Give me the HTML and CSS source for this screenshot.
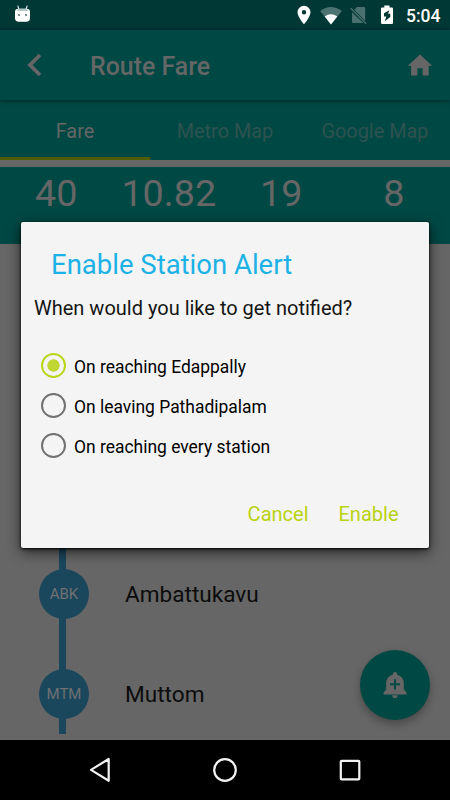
FILE: index.html
```html
<!DOCTYPE html>
<html lang="en">
<head>
<meta charset="utf-8">
<title>Route Fare</title>
<link rel="stylesheet" href="styles.css">
</head>
<body>
<div class="screen">
  <header class="status">
    <svg class="droid" width="18" height="20" viewBox="0 0 18 20"><path d="M4.800 .6l1.200 4M14.200 .6l-1.200 4" stroke="#dfe8e7" stroke-width="1.200"/><path d="M2 6.500Q2 4 5.500 3.700h8q3.500.3 3.500 2.800v6.500q0 3.800-3.800 3.800H5.800q-3.800 0-3.800-3.800z" fill="#fff"/><path d="M4 6Q4.500 3.700 6.500 3.700h6q2 0 2.500 2.300z" fill="#b5c6c4"/><path d="M5 9h2v2H5zM12 9h2v2h-2z" fill="#7c9290"/></svg>
    <div class="signals">
      <svg width="14" height="20" viewBox="0 0 14 20"><path fill="#fff" fill-rule="evenodd" d="M7 .8A6.500 6.500 0 0 0 .5 7.300C.5 12 7 19.300 7 19.300S13.500 12 13.500 7.300A6.500 6.500 0 0 0 7 .8zm0 4.200a2.200 2.200 0 1 1 0 4.400A2.200 2.200 0 0 1 7 5z"/></svg>
      <svg class="wifi" width="22" height="19" viewBox="0 0 22 19"><path d="M11 18.500L.2 5.100Q11-3.200 21.800 5.100z" fill="#4d7472"/><path d="M11 18.500L4.700 10.600Q11 5.800 17.300 10.600z" fill="#fff"/></svg>
      <svg class="sim" width="17" height="19" viewBox="0 0 17 19"><path fill="#4a716f" d="M7 1h7q1.200 0 1.200 1.200v12.700L4.300 3.700zM2 6.200L13.300 17H3.200Q2 17 2 15.800z"/><path d="M.8 2.200l15.300 15.500" stroke="#4a716f" stroke-width="1.300"/></svg>
      <svg class="battery" width="14" height="20" viewBox="0 0 14 20"><path fill="#fff" d="M4.300.5h5.200v2h2.300q1.200 0 1.200 1.200v14.100q0 1.200-1.200 1.200H2.200Q1 19 1 17.800V3.700q0-1.200 1.200-1.200h2.100z"/><path fill="#003836" d="M9.400 5.200L4 8.300v3.200h2.300l-1.500 4.700 5.500-4.300V8.700H8z"/></svg>
      <span class="clock">5:04</span>
    </div>
  </header>
  <div class="toolbar">
    <svg class="back" width="16" height="24" viewBox="0 0 16 24"><path d="M14 2L4 12l10 10" fill="none" stroke="#666" stroke-width="3.800"/></svg>
    <h1>Route Fare</h1>
    <svg class="home" width="26" height="22" viewBox="0 0 26 22"><path fill="#666" d="M13 .5L25.200 11.800h-3.500v9.700h-6v-7.300h-5.400v7.300H4.100v-9.700H.8z"/></svg>
  </div>
  <nav class="tabs"><span class="tab active">Fare</span><span class="tab">Metro Map</span><span class="tab">Google Map</span></nav>
  <div class="stats"><span>40</span><span>10.82</span><span>19</span><span>8</span></div>
  <main class="stations">
    <div class="station"><span class="code">ABK</span><span class="name">Ambattukavu</span></div>
    <div class="station last"><span class="code">MTM</span><span class="name">Muttom</span></div>
  </main>
  <footer class="navbar">
    <svg width="22" height="26" viewBox="0 0 22 26"><path d="M19.700 2v21.800L2 12.900z" fill="none" stroke="#f2f2f2" stroke-width="2.200" stroke-linejoin="round"/></svg>
    <svg width="26" height="26" viewBox="0 0 26 26"><circle cx="13" cy="13" r="10.800" fill="none" stroke="#f2f2f2" stroke-width="2.200"/></svg>
    <svg width="22" height="22" viewBox="0 0 22 22"><rect x="1.800" y="1.800" width="18.500" height="18.500" rx=".8" fill="none" stroke="#f2f2f2" stroke-width="2.200"/></svg>
  </footer>
  <div class="fab"><svg width="24" height="28" viewBox="0 0 24 28"><path fill="#666" d="M12 1a2.200 2.200 0 0 1 2.200 2.200v.6c4 1 6.600 4.200 6.600 8.300v6.400l2.700 3.300v1.600H.5v-1.600l2.700-3.300v-6.400c0-4.100 2.600-7.300 6.600-8.300v-.6A2.200 2.200 0 0 1 12 1zM9.200 24.300h5.600a2.800 2.800 0 0 1-5.600 0z"/><path d="M12 8.200v10.300M7 13.300h10" stroke="#004844" stroke-width="2"/></svg></div>
  <section class="dialog">
    <h2>Enable Station Alert</h2>
    <p>When would you like to get notified?</p>
    <div class="options">
      <div class="option"><span class="radio checked"></span><span class="label">On reaching Edappally</span></div>
      <div class="option"><span class="radio"></span><span class="label">On leaving Pathadipalam</span></div>
      <div class="option"><span class="radio"></span><span class="label">On reaching every station</span></div>
    </div>
    <div class="actions"><span>Cancel</span><span>Enable</span></div>
  </section>
</div>
</body>
</html>
```
FILE: styles.css
```css
* { box-sizing: border-box; }
body { margin: 0; font-family: Roboto, "Liberation Sans", sans-serif; }
svg { display: block; flex: none; }
.screen { position: relative; width: 450px; height: 800px; overflow: hidden; background: #666; display: flex; flex-direction: column; }
.status { height: 30px; flex: none; background: #003836; display: flex; justify-content: space-between; padding: 5px 9px 0 13px; }
.signals { display: flex; }
.wifi { margin-left: 9px; margin-top: 1px; }
.sim { margin-left: 8px; margin-top: 1px; }
.battery { margin-left: 13px; }
.clock { margin-left: 12px; width: 35px; color: #fff; font-size: 17.500px; font-weight: 500; line-height: 22px; white-space: nowrap; }
.toolbar { position: relative; z-index: 1; height: 70px; flex: none; background: #004844; box-shadow: 0 1px 5px rgba(0,0,0,.45); display: flex; align-items: center; padding: 0 17px 0 26px; }
.toolbar h1 { margin: 3px 0 0 48px; font-size: 24.900px; font-weight: 500; line-height: 30px; color: #666; flex: 1; }
.tabs { height: 60px; flex: none; background: #004844; display: grid; grid-template-columns: repeat(3, 1fr); grid-template-rows: 60px; font-size: 19.900px; line-height: 63px; text-align: center; color: #2e5350; }
.tab.active { color: #666; border-bottom: 3px solid #515c07; }
.stats { height: 77px; flex: none; margin-top: 6.500px; background: #004844; display: grid; grid-template-columns: repeat(4, 1fr); text-align: center; color: #666; font-size: 37.700px; line-height: 53px; }
.stations { flex: 1; min-height: 0; padding: 300px 0 0 38px; }
.station { height: 100px; display: flex; align-items: center; background: linear-gradient(#1b475d, #1b475d) 21px 0 / 7px 100% no-repeat; }
.station.last { background-size: 7px 90px; }
.code { width: 50px; height: 50px; margin-left: 1px; border-radius: 50%; background: #1b475d; color: #707173; font-size: 15px; line-height: 51px; text-align: center; }
.name { margin: 1.500px 0 0 36px; font-size: 22.600px; color: #0c0c0c; }
.navbar { position: relative; height: 60px; flex: none; background: #000; display: flex; align-items: center; justify-content: space-between; padding: 0 89px; }
.fab { position: absolute; left: 360px; top: 650px; width: 70px; height: 70px; border-radius: 50%; background: #004844; box-shadow: 0 4px 9px rgba(0,0,0,.3); display: flex; align-items: center; justify-content: center; }
.dialog { position: absolute; z-index: 2; left: 21px; top: 222px; width: 408px; height: 326px; background: #f4f4f4; border-radius: 2px; box-shadow: 0 1px 3px #000, 0 4px 14px rgba(0,0,0,.65); padding: 26px 13px 0; display: flex; flex-direction: column; }
.dialog h2 { margin: 0 0 0 17px; font-size: 27.500px; font-weight: 400; line-height: 34px; color: #1cb2e6; }
.dialog p { margin: 12px 0 0; font-size: 20px; line-height: 28px; color: #151515; }
.options { margin: 24px 0 0 7px; }
.option { height: 40px; display: flex; align-items: center; gap: 8px; font-size: 17.450px; color: #000; }
.label { margin-top: 1px; }
.radio { width: 25px; height: 25px; margin-top: -1px; border: 2px solid #707070; border-radius: 50%; }
.radio.checked { border-color: #bbd519; background: radial-gradient(circle, #bfd730 0 5.800px, transparent 6.500px); }
.actions { margin: 34px 17.500px 0 0; display: flex; justify-content: flex-end; gap: 30px; font-size: 20px; line-height: 28px; color: #b9d312; }
```
